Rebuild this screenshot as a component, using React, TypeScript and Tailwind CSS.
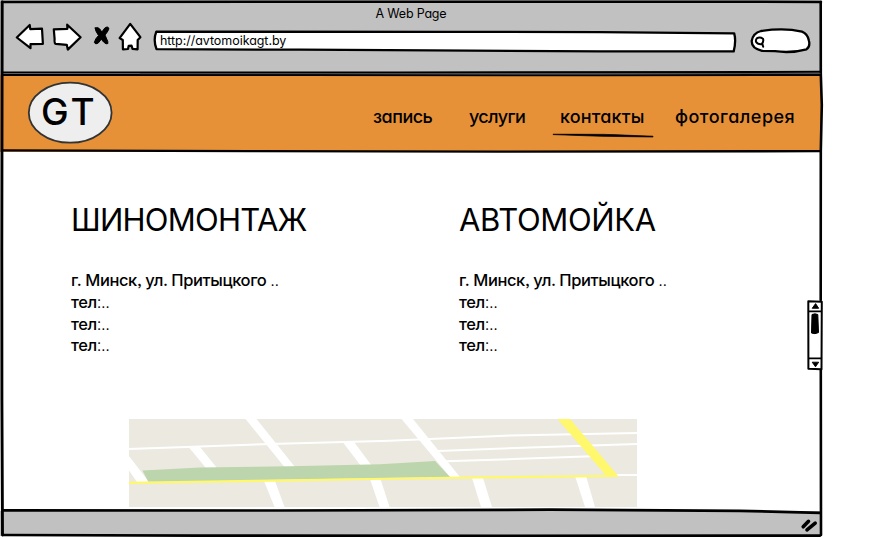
import React from "react";

const INK = "#000";

function ToolbarIcons() {
  return (
    <svg width="130" height="36" viewBox="14 20 130 36" className="block" fill="#fff" stroke={INK} strokeWidth="2.2" strokeLinejoin="round" strokeLinecap="round">
      <path d="M16.8 37.5 29.7 25 30.3 29.2 42 28.7 42.9 43.8 30.5 44.2 30.5 48.2Z" />
      <path d="M53.8 29.3 67.4 28.8 67.2 24.7 80.6 37.2 67.8 49.6 66.8 44.8 55.8 43.8Q54.2 43.5 54.6 39Z" />
      <path d="M95.2 28Q98 26.5 99.8 29L101.8 32 104.8 28Q107.5 25.8 108.8 28Q109.2 30 105 35L107.8 41.5Q108.8 44.5 106 43.8Q103.5 42.5 101.3 39.2L98.3 43Q95.5 45 94.3 42.5Q95 39 98.5 35.5Q95 30.5 95.2 28Z" fill={INK} strokeWidth="1" />
      <path d="M130.2 23.8 140.4 37.2 137.7 40 137.6 49.3 132.5 48.8 131.5 45.6 128.7 45.8 128 49 122.9 49.3 122.8 40 119.6 38.1Z" />
    </svg>
  );
}

function AddressBar() {
  return (
    <div className="relative h-[24px] w-[586px]">
      <svg width="586" height="24" viewBox="152 29 586 24" className="absolute inset-0" fill="#fff" stroke={INK} strokeWidth="2.3" strokeLinejoin="round">
        <path d="M156.3 31.7 450 31.8 600 32.2 734.2 33.4Q736.3 41 733.7 51.4L600 51.4 430 50.3 300 49.7 156.5 49.2Q153 40 156.3 31.7Z" />
      </svg>
      <span className="relative ml-[8px] block whitespace-nowrap pt-[3px] text-[12.5px] leading-[18px] tracking-[-0.05px]">http://avtomoikagt.by</span>
    </div>
  );
}

function SearchBox() {
  return (
    <svg width="64" height="28" viewBox="749 27 64 28" className="block" fill="#fff" stroke={INK} strokeWidth="2.3" strokeLinecap="round" strokeLinejoin="round">
      <path d="M761 31Q784 27.5 802 31.6Q808 34 809 41Q810.3 47 806.5 49.3Q791 53.5 775 51.2L762 50.8Q751.5 48.5 751.7 41Q753 33 761 31Z" />
      <path d="M757 38.2Q760 36.6 763 38.8Q764 42 761.5 44.3Q757.5 44.6 756 41.8Q755.5 39.5 757 38.2ZM762.3 43.8 763.2 46.7" strokeWidth="2" />
    </svg>
  );
}

function BrowserChrome() {
  return (
    <div className="h-[75px] bg-[#c1c1c1]">
      <div className="h-[20px] pt-[5px] text-center text-[12.5px] leading-[18px] tracking-[-0.2px]">A Web Page</div>
      <div className="flex items-start pl-[14px]">
        <ToolbarIcons />
        <div className="ml-[8px] mt-[9px]"><AddressBar /></div>
        <div className="ml-[11px] mt-[7px]"><SearchBox /></div>
      </div>
    </div>
  );
}

function SiteHeader() {
  return (
    <header className="flex h-[77px] items-start bg-[#e69138]">
      <div className="relative ml-[27px] mt-[6px] h-[63px] w-[87px] shrink-0">
        <svg width="87" height="63" viewBox="27 81 87 63" className="absolute inset-0">
          <ellipse cx="70.2" cy="112.7" rx="41.4" ry="30" fill="#eee" stroke="#333" strokeWidth="1.8" />
        </svg>
        <span className="relative ml-[14px] block pt-[10px] text-[37px] font-medium leading-[42px] tracking-[3px]">GT</span>
      </div>
      <nav className="ml-[259px] flex pt-[30px] text-[18px] font-[450] leading-[24px] whitespace-nowrap">
        <a className="w-[96px] tracking-[-0.5px]">запись</a>
        <a className="w-[91px] tracking-[-0.65px]">услуги</a>
        <a className="relative w-[115px] tracking-[0.15px]">
          контакты
          <svg width="102" height="6" viewBox="552 132 102 6" className="absolute -left-[8px] top-[27px]">
            <path d="M553 134.2Q605 133.5 653 136.2V137Q600 136.8 553 134.6Z" fill={INK} stroke={INK} strokeWidth=".7" />
          </svg>
        </a>
        <a className="tracking-[0.5px]">фотогалерея</a>
      </nav>
    </header>
  );
}

function Phone() {
  return (
    <p className="tracking-[-0.4px]">
      тел<span className="font-light">:..</span>
    </p>
  );
}

function Contact({ title, titleClass }: { title: string; titleClass: string }) {
  return (
    <section className="w-[388px] shrink-0 whitespace-nowrap">
      <h1 className={"text-[31px] leading-[38px] " + titleClass}>{title}</h1>
      <div className="mt-[31px] text-[16.5px] font-[450] leading-[21.8px]">
        <p className="tracking-[-0.4px]">г. Минск, ул. Притыцкого <span className="font-light">..</span></p>
        <Phone />
        <Phone />
        <Phone />
      </div>
    </section>
  );
}

function StreetMap() {
  return (
    <svg width="508" height="88" viewBox="129 419 508 88" className="block">
      <path fill="#ece9e1" d="M129 419H637V507H129Z" />
      <path fill="none" stroke="#fff" strokeWidth="2" d="M129 449 200 446.6 270 444 390 440.8 510 435.5 637 433M438 451 530 447.5 637 444M446 461.3 520 458.8 592 456.2M610 475H637" />
      <g fill="#fff">
        <path d="M245.5 419H256.5L295 467H284.5Z" />
        <path d="M189 447.5 200 447 217 468H206Z" />
        <path d="M343 442.5 354 442 372 466H361Z" />
        <path d="M401.5 419H413L460 477H450Z" />
        <path d="M129 456 149 482H137L129 470.5Z" />
        <path d="M264 481H275L284.5 507H274.5Z" />
        <path d="M370 479H380.5L389.5 507H379.5Z" />
        <path d="M472 478H483L492 507H481Z" />
        <path d="M575 476H586L595 507H585Z" />
      </g>
      <path fill="#bcd5ad" d="M142.5 470.5 200 467.5 290 466.3 380 464.3 435 461 450 477 290 479.5 148.5 482.3Z" />
      <path fill="none" stroke="#fff86c" strokeWidth="2.2" d="M129 482.8 290 480.4 370 479 480 477.4 617 475.8" />
      <path fill="#fff86c" d="M557.5 419H570L619 477 606 475.5Z" />
    </svg>
  );
}

function ScrollBar() {
  return (
    <svg width="19" height="73" viewBox="806 299 19 73" className="absolute left-[806px] top-[299px]" stroke={INK} strokeLinejoin="round">
      <path d="M808.3 301.2 821.8 301.8 821.5 369.2 808.4 368.8Z" fill="#fff" strokeWidth="2" />
      <path d="M808.5 311.4H821.5M808.8 358.3H821.5" strokeWidth="1.8" />
      <path d="M812.2 308.3 815.6 303.6 818.7 308.3ZM812.2 362.2H818.7L815.5 366.8Z" strokeWidth=".9" />
      <path d="M812 314.5Q815 313.2 817.8 314.5L818.5 332.6Q815 334.5 811.5 333Z" strokeWidth="1" />
    </svg>
  );
}

function SketchOutline() {
  return (
    <svg width="882" height="538" viewBox="0 0 882 538" className="pointer-events-none absolute inset-0" fill="none" stroke={INK} strokeLinecap="round">
      <path strokeWidth="2.5" d="M2 1.9 400 1.7 821 1.9" />
      <path strokeWidth="2.9" d="M2.2 2 1.8 250 1.9 400 2.5 535" />
      <path strokeWidth="2.6" d="M820.7 2 820.8 74 821.8 105 820.8 151 820.7 300M820.8 369 821 535" />
      <path strokeWidth="2" d="M3 72.6 400 72.4 820 71.8" />
      <path strokeWidth="2" d="M3 75 300 74.9 600 75.3 820 75" />
      <path strokeWidth="1" stroke="#444" d="M140 73.7 820 73.6" />
      <path strokeWidth="2.3" d="M2 150.4 250 151.2 500 151.6 820 151.2" />
      <path strokeWidth="2.7" d="M3 510.4 280 510.5 550 509.7 740 510.8 820 512.8" />
      <path strokeWidth="2.6" d="M3 535 200 535.6 500 535.8 820 535.6" />
      <path strokeWidth="3.6" d="M803.2 526.8 808.5 521.3M807 529.8 815.2 523.2" />
    </svg>
  );
}

export default function App() {
  return (
    <div className="relative h-[538px] w-[882px] overflow-hidden bg-white font-['Inter','Noto_Sans',sans-serif] text-black [font-feature-settings:'cv11','ss03']">
      <div className="flex h-[536px] w-[822px] flex-col">
        <BrowserChrome />
        <SiteHeader />
        <main className="h-[359px]">
          <div className="flex pl-[71px] pt-[49px]">
            <Contact title="ШИНОМОНТАЖ" titleClass="tracking-[-0.75px]" />
            <Contact title="АВТОМОЙКА" titleClass="tracking-[-0.35px]" />
          </div>
          <div className="ml-[129px] mt-[62px]"><StreetMap /></div>
        </main>
        <footer className="h-[25px] bg-[#c1c1c1]" />
      </div>
      <SketchOutline />
      <ScrollBar />
    </div>
  );
}
